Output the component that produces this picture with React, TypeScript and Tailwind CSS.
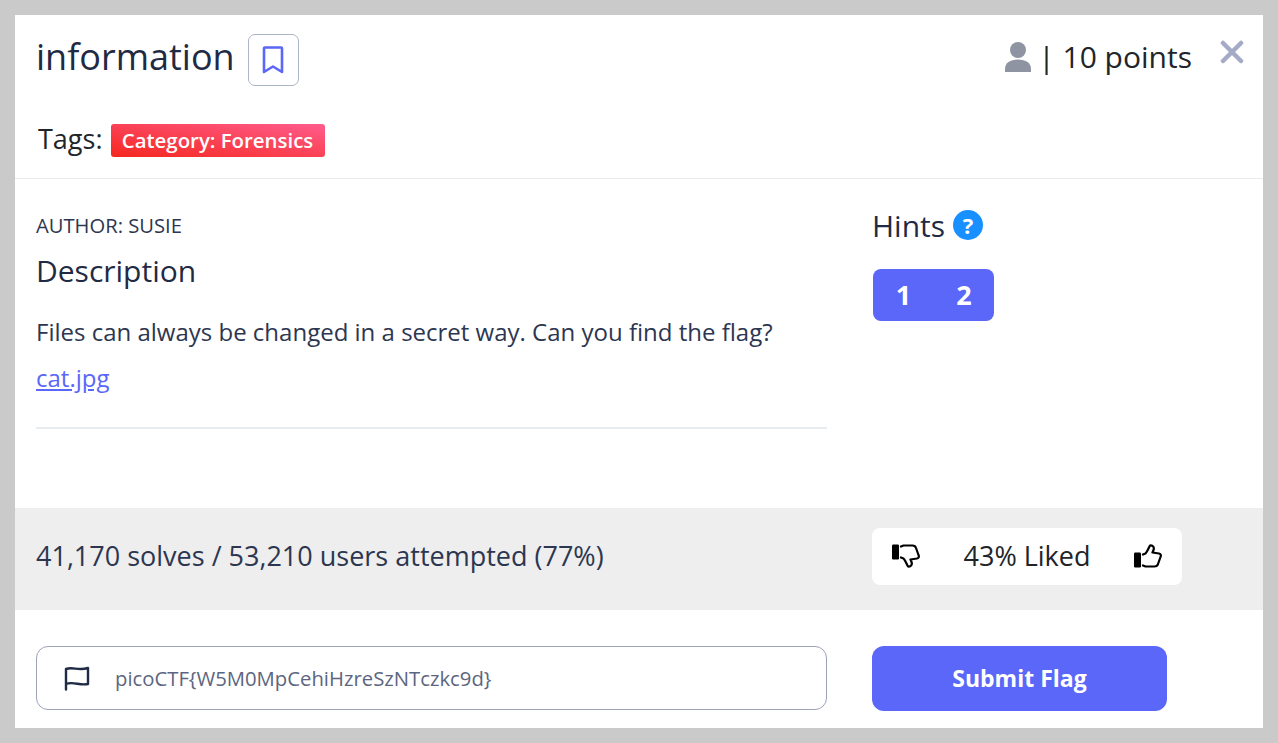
function ThumbUp({ down }: { down?: boolean }) {
  return (
    <svg width="28" height="24" viewBox="0 0 28 24" fill="none" stroke="#000" strokeWidth="2.2" strokeLinejoin="round" strokeLinecap="round" className={down ? "-scale-y-100" : ""}>
      <rect x="0" y="8.5" width="7" height="15" rx="1.2" fill="#000" stroke="none" />
      <path d="M9 10.5 L11.5 9.5 C13.5 7.5 14.5 4 16 1.5 C19 1 20.5 3.5 19.5 6 L18.5 8.5 L25 9.5 C27 10 27.2 11.5 26.5 13 L24 20 C23.5 21.7 22 22.5 20.5 22.5 L11.5 22.5 L9 21.5" />
    </svg>
  );
}

export default function App() {
  return (
    <div className="h-[743px] w-[1278px] overflow-hidden bg-[#cacaca] p-[15px] font-['Open_Sans',sans-serif] text-[#212529]">
      <div className="flex h-[713px] flex-col bg-white">
        <header className="h-[164px] border-b border-[#e9ecef] pl-[21px] pr-[19px]">
          <div className="flex items-start justify-between pt-[19px]">
            <div className="flex items-center">
              <h1 className="-mt-[6px] text-[36px] leading-[46px] text-[#1f2a44]">information</h1>
              <button className="ml-[13px] flex h-[52px] w-[51px] items-center justify-center rounded-[7px] border border-[#adb5c9]">
                <svg width="22" height="28" viewBox="0 0 22 28" fill="none" stroke="#5a67f8" strokeWidth="2.6" strokeLinejoin="round">
                  <path d="M2 2.5 a1 1 0 0 1 1-1 H19 a1 1 0 0 1 1 1 V26 L11 20.5 L2 26 Z" />
                </svg>
              </button>
            </div>
            <div className="flex items-start">
              <div className="mt-[3px] flex items-center text-[30px] leading-[40px] text-[#212529]">
                <svg width="26" height="30" viewBox="0 0 26 30" fill="#8f94a3" className="mr-[7px]">
                  <circle cx="13" cy="8" r="8" />
                  <path d="M0 30 V27 C0 21 5 17.5 13 17.5 C21 17.5 26 21 26 27 V30 Z" />
                </svg>
                <span>| 10 points</span>
              </div>
              <span className="ml-[28px] mt-[6px] block h-[24px] w-[24px]">
                <svg viewBox="0 0 24 24" width="24" height="24" stroke="#a3abc6" strokeWidth="4.5" strokeLinecap="round">
                  <path d="M3 3L21 21M21 3L3 21" />
                </svg>
              </span>
            </div>
          </div>
          <div className="mt-[38px] flex items-center pl-[2px]">
            <span className="-mt-[4px] text-[27px] leading-[34px]">Tags:</span>
            <span className="ml-[8px] flex h-[33px] w-[214px] items-center justify-center rounded-[3px] bg-[linear-gradient(to_top_right,#f5281e,#ff5c8d)] text-[20.4px] font-semibold text-white">
              Category: Forensics
            </span>
          </div>
        </header>

        <div className="flex flex-1 pl-[21px]">
          <section className="w-[791px] pt-[33px]">
            <p className="text-[20.2px] leading-[26px] text-[#2d3650]">AUTHOR: SUSIE</p>
            <h2 className="mt-[13px] text-[30px] leading-[40px] text-[#1f2a44]">Description</h2>
            <p className="mt-[25px] text-[24px] leading-[32px] text-[#2d3650]">Files can always be changed in a secret way. Can you find the flag?</p>
            <a className="mt-[14px] block text-[24px] leading-[32px] text-[#5a67f8] underline">cat.jpg</a>
            <hr className="mt-[33px] border-t-2 border-[#e9ecef]" />
          </section>
          <aside className="ml-[45px] pt-[27px]">
            <div className="flex items-center">
              <h2 className="text-[30px] leading-[40px] text-[#1f2a44]">Hints</h2>
              <span className="ml-[8px] -mt-[2px] flex h-[30px] w-[30px] items-center justify-center rounded-full bg-[#1890ff] text-[22px] font-bold text-white">?</span>
            </div>
            <div className="ml-[1px] mt-[23px] flex h-[52px] w-[121px] items-center rounded-[8px] bg-[#5a67f8] text-[27px] font-bold text-white">
              <span className="w-[61px] text-center">1</span>
              <span className="w-[60px] text-center">2</span>
            </div>
          </aside>
        </div>

        <div className="flex h-[102px] items-center bg-[#eeeeee] pl-[21px]">
          <p className="-mt-[6px] w-[836px] text-[27px] text-[#2d3650]">41,170 solves / 53,210 users attempted (77%)</p>
          <div className="-mt-[6px] flex h-[57px] w-[310px] items-center justify-between rounded-[8px] bg-white px-[20px] text-[27px] text-[#212529]">
            <ThumbUp down />
            <span>43% Liked</span>
            <ThumbUp />
          </div>
        </div>

        <div className="flex h-[118px] pl-[21px] pt-[36px]">
          <div className="flex h-[64px] w-[791px] items-center rounded-[12px] border border-[#9ca3b5] pl-[27px]">
            <svg width="26" height="25" viewBox="0 0 26 25" fill="none" stroke="#1f2a44" strokeWidth="2.4" strokeLinecap="round" strokeLinejoin="round">
              <path d="M2 23.5 V3 C9 0.5 14 5 24 2 V18 C16 20 9 15 2 18" />
            </svg>
            <span className="ml-[25px] text-[20.3px] text-[#5c6680]">picoCTF&#123;W5M0MpCehiHzreSzNTczkc9d&#125;</span>
          </div>
          <button className="ml-[45px] h-[65px] w-[295px] rounded-[12px] bg-[#5a67f8] text-[23px] font-bold text-white">Submit Flag</button>
        </div>
      </div>
    </div>
  );
}
